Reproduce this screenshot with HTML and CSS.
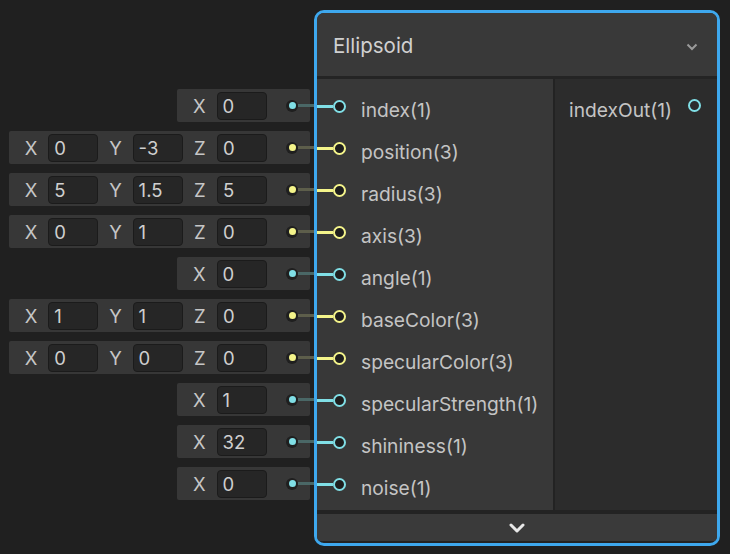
FILE: index.html
```html
<!DOCTYPE html>
<html>
<head>
<meta charset="utf-8">
<link rel="stylesheet" href="styles.css">
</head>
<body>
<div class="canvas">
  <div class="fields">
    <div class="frow"><div class="fbox c"><span class="lbl">X</span><span class="inp">0</span><span class="dot"></span><span class="wire"></span></div></div>
    <div class="frow"><div class="fbox y"><span class="lbl">X</span><span class="inp">0</span><span class="lbl">Y</span><span class="inp">-3</span><span class="lbl">Z</span><span class="inp">0</span><span class="dot"></span><span class="wire"></span></div></div>
    <div class="frow"><div class="fbox y"><span class="lbl">X</span><span class="inp">5</span><span class="lbl">Y</span><span class="inp">1.5</span><span class="lbl">Z</span><span class="inp">5</span><span class="dot"></span><span class="wire"></span></div></div>
    <div class="frow"><div class="fbox y"><span class="lbl">X</span><span class="inp">0</span><span class="lbl">Y</span><span class="inp">1</span><span class="lbl">Z</span><span class="inp">0</span><span class="dot"></span><span class="wire"></span></div></div>
    <div class="frow"><div class="fbox c"><span class="lbl">X</span><span class="inp">0</span><span class="dot"></span><span class="wire"></span></div></div>
    <div class="frow"><div class="fbox y"><span class="lbl">X</span><span class="inp">1</span><span class="lbl">Y</span><span class="inp">1</span><span class="lbl">Z</span><span class="inp">0</span><span class="dot"></span><span class="wire"></span></div></div>
    <div class="frow"><div class="fbox y"><span class="lbl">X</span><span class="inp">0</span><span class="lbl">Y</span><span class="inp">0</span><span class="lbl">Z</span><span class="inp">0</span><span class="dot"></span><span class="wire"></span></div></div>
    <div class="frow"><div class="fbox c"><span class="lbl">X</span><span class="inp">1</span><span class="dot"></span><span class="wire"></span></div></div>
    <div class="frow"><div class="fbox c"><span class="lbl">X</span><span class="inp">32</span><span class="dot"></span><span class="wire"></span></div></div>
    <div class="frow"><div class="fbox c"><span class="lbl">X</span><span class="inp">0</span><span class="dot"></span><span class="wire"></span></div></div>
  </div>
  <div class="node">
    <div class="node-inner">
      <div class="header">
        <span class="title">Ellipsoid</span>
        <svg class="hchev" width="12" height="8" viewBox="0 0 12 8"><path d="M1.5 1.5 L6 6 L10.5 1.5" fill="none" stroke="#9a9a9a" stroke-width="2"/></svg>
      </div>
      <div class="body">
        <div class="inputs">
          <div class="port-row c"><span class="pwire"></span><span class="port"></span><span class="pl">index(1)</span></div>
          <div class="port-row y"><span class="pwire"></span><span class="port"></span><span class="pl">position(3)</span></div>
          <div class="port-row y"><span class="pwire"></span><span class="port"></span><span class="pl">radius(3)</span></div>
          <div class="port-row y"><span class="pwire"></span><span class="port"></span><span class="pl">axis(3)</span></div>
          <div class="port-row c"><span class="pwire"></span><span class="port"></span><span class="pl">angle(1)</span></div>
          <div class="port-row y"><span class="pwire"></span><span class="port"></span><span class="pl">baseColor(3)</span></div>
          <div class="port-row y"><span class="pwire"></span><span class="port"></span><span class="pl">specularColor(3)</span></div>
          <div class="port-row c"><span class="pwire"></span><span class="port"></span><span class="pl">specularStrength(1)</span></div>
          <div class="port-row c"><span class="pwire"></span><span class="port"></span><span class="pl">shininess(1)</span></div>
          <div class="port-row c"><span class="pwire"></span><span class="port"></span><span class="pl">noise(1)</span></div>
        </div>
        <div class="outputs">
          <div class="out-row"><span class="pl">indexOut(1)</span><span class="oport"></span></div>
        </div>
      </div>
      <div class="footer">
        <svg width="16" height="10" viewBox="0 0 16 10"><path d="M2 2 L8 8 L14 2" fill="none" stroke="#e8e8e8" stroke-width="3" stroke-linecap="round" stroke-linejoin="round"/></svg>
      </div>
    </div>
  </div>
</div>
</body>
</html>
```
FILE: styles.css
```css
* { box-sizing: border-box; }
html, body { margin: 0; padding: 0; }
body {
  background: #202020;
  width: 730px;
  height: 554px;
  overflow: hidden;
  font-family: "Inter", "Noto Sans", sans-serif;
}
.canvas {
  display: flex;
  align-items: flex-start;
}
.fields {
  width: 314px;
  padding-top: 89px;
  padding-right: 4px;
  display: flex;
  flex-direction: column;
  gap: 9px;
}
.frow {
  display: flex;
  justify-content: flex-end;
}
.fbox {
  height: 33px;
  background: #373737;
  border-radius: 2px;
  display: flex;
  align-items: center;
  padding-left: 5px;
  position: relative;
}
.fbox.c { width: 133px; }
.fbox.y { width: 301px; }
.lbl {
  width: 35px;
  text-align: center;
  color: #c6c6c6;
  font-size: 18.5px;
}
.inp {
  width: 51px;
  height: 28px;
  background: #262626;
  border: 1px solid #1b1b1b;
  border-radius: 4px;
  color: #cfcfcf;
  font-size: 18.5px;
  line-height: 26px;
  padding-left: 5px;
}
.dot {
  width: 12px;
  height: 12px;
  border-radius: 50%;
  background: #1f1f1f;
  margin-left: 19px;
  display: flex;
  align-items: center;
  justify-content: center;
  flex: none;
}
.dot::after {
  content: "";
  width: 7px;
  height: 7px;
  border-radius: 50%;
  background: var(--pc);
}
.wire {
  width: 16px;
  height: 3px;
  background: var(--pd);
  margin-right: -4px;
  flex: none;
}
.c { --pc: #80dfe6; --pd: #4a6766; }
.y { --pc: #f4f48a; --pd: #5d5e4b; }

.node {
  margin-top: 10px;
  width: 406px;
  height: 536px;
  border: 3px solid #3ea8ee;
  border-radius: 10px;
  background: #232323;
}
.node-inner {
  height: 100%;
  border-radius: 7px;
  overflow: hidden;
  display: flex;
  flex-direction: column;
}
.header {
  height: 66px;
  flex: none;
  background: #393939;
  display: flex;
  align-items: center;
  justify-content: space-between;
  padding: 0 19px 0 16px;
  border-bottom: 3px solid #242424;
}
.title {
  color: #d0d0d0;
  font-size: 20.5px;
  margin-top: 2px;
}
.hchev { margin-top: 4px; }
.body {
  display: flex;
  height: 431px;
  flex: none;
}
.inputs {
  width: 236px;
  background: #383838;
  padding: 6.5px 0 4.5px;
  display: flex;
  flex-direction: column;
}
.outputs {
  flex: 1;
  margin-left: 2px;
  background: #2c2c2c;
  padding-top: 6.5px;
}
.port-row {
  height: 42px;
  display: flex;
  align-items: center;
}
.pwire {
  width: 16px;
  height: 3px;
  background: var(--pc);
  flex: none;
}
.port {
  width: 13px;
  height: 13px;
  border-radius: 50%;
  border: 2px solid var(--pc);
  background: #1e1e1e;
  flex: none;
}
.pl {
  color: #c4c4c4;
  font-size: 19.2px;
  margin-left: 15px;
  margin-top: 6px;
}
.out-row {
  height: 42px;
  display: flex;
  align-items: center;
}
.out-row .pl { margin-left: 14px; }
.oport {
  width: 13px;
  height: 13px;
  border-radius: 50%;
  border: 2px solid #80dfe6;
  margin-left: 16px;
  margin-top: -2px;
}
.footer {
  margin-top: 4px;
  height: 27px;
  background: #3a3a3a;
  display: flex;
  align-items: center;
  justify-content: center;
}
.footer svg { margin-left: -1px; }
```
